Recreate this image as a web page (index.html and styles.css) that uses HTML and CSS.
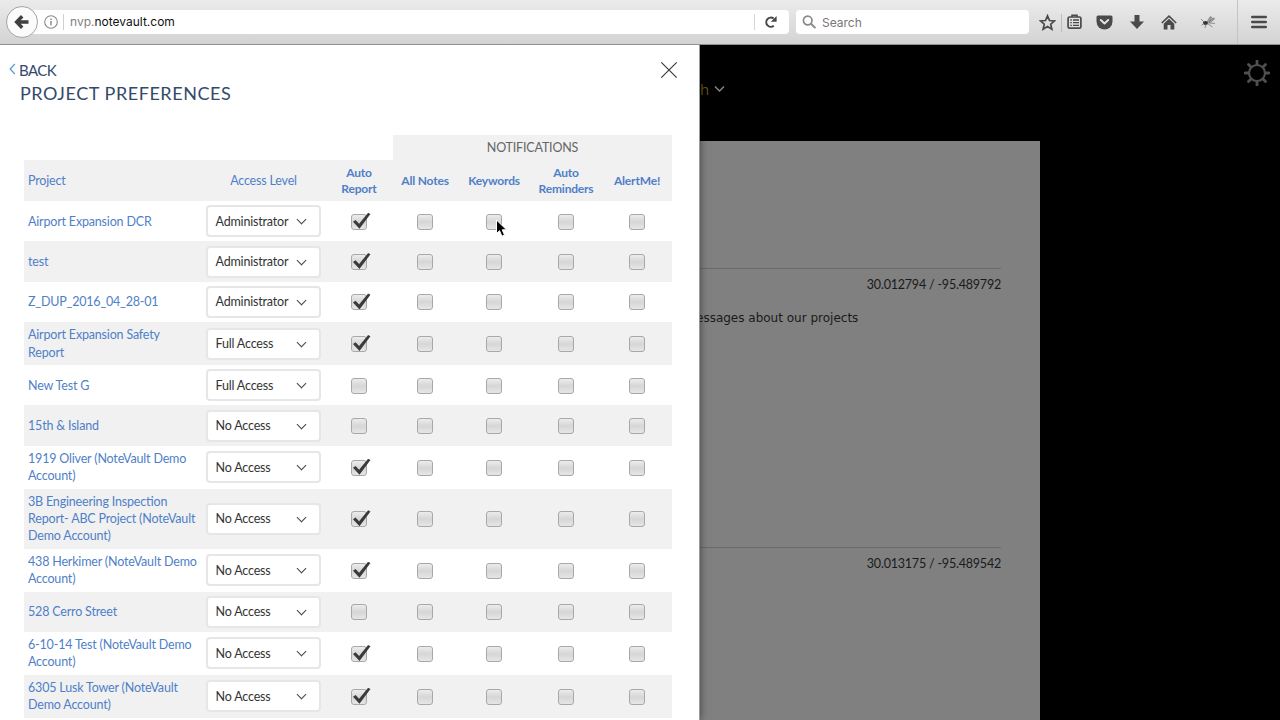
FILE: index.html
```html
<!DOCTYPE html>
<html lang="en">
<head>
  <meta charset="UTF-8" />
  <meta name="viewport" content="width=device-width, initial-scale=1.0"/>
  <title>Project Preferences</title>
  <link rel="stylesheet" href="styles.css">
</head>
<body>
  <header class="toolbar">
    <div class="address">
      <button class="back-btn" aria-label="Back">
        <svg width="16" height="16" viewBox="0 0 16 16"><path d="M14.500 8H4M8.200 2.200L2.600 8l5.600 5.800" fill="none" stroke="#3f3f3f" stroke-width="3.400"/></svg>
      </button>
      <svg class="info" width="14" height="14" viewBox="0 0 14 14"><circle cx="7" cy="7" r="6.3" fill="none" stroke="#8b8b8b" stroke-width="1.1"/><path d="M7 6v4.2M7 3.4v1.5" stroke="#8b8b8b" stroke-width="1.5"/></svg>
      <span class="url"><span class="sub">nvp.</span>notevault.com</span>
      <span class="reload">
        <svg width="14" height="14" viewBox="0 0 14 14"><path d="M9.8 10.8A4.6 4.6 0 1 1 9.6 3.5" fill="none" stroke="#484848" stroke-width="2"/><path d="M12.6 1v5.8H6.8z" fill="#484848"/></svg>
      </span>
    </div>
    <div class="search">
      <svg width="15" height="15" viewBox="0 0 15 15"><circle cx="5.7" cy="5.5" r="4.3" fill="none" stroke="#8a8a8a" stroke-width="1.7"/><path d="M8.9 8.7l4.5 4.4" stroke="#8a8a8a" stroke-width="2"/></svg>
      <span>Search</span>
    </div>
    <nav class="tools">
      <svg class="star" width="17" height="17" viewBox="0 0 17 17"><path d="M8.5 1.8l2 4.7 5 .4-3.8 3.3 1.2 5-4.400-2.700-4.400 2.700 1.200-5L1.500 6.900l5-.4z" fill="none" stroke="#4a4a4a" stroke-width="1.700"/></svg>
      <svg class="list" width="15" height="16" viewBox="0 0 15 16"><path d="M5 3V1.200h5V3" fill="none" stroke="#4a4a4a" stroke-width="1.600"/><rect x="1.100" y="3" width="12.800" height="11.200" rx="1.500" fill="none" stroke="#4a4a4a" stroke-width="1.700"/><path d="M3.300 6h1.500M6 6h6M3.300 8.700h1.500M6 8.700h6M3.300 11.400h1.500M6 11.400h6" stroke="#4a4a4a" stroke-width="1.300"/></svg>
      <svg class="pocket" width="17" height="15" viewBox="0 0 17 15"><path d="M2 .5h13q1.500 0 1.500 1.500v4.500a8 8 0 0 1-16 0V2Q.5.5 2 .5z" fill="#4a4a4a"/><path d="M4.800 5l3.700 3.500L12.200 5" fill="none" stroke="#e2e2e2" stroke-width="2" stroke-linecap="round" stroke-linejoin="round"/></svg>
      <svg class="download" width="14" height="14" viewBox="0 0 14 14"><path d="M4.500 0h5v6.500H14L7 14 0 6.500h4.500z" fill="#4a4a4a"/></svg>
      <svg class="home" width="16" height="15" viewBox="0 0 16 15"><path d="M.8 8L8 1.200 15.200 8" fill="none" stroke="#4a4a4a" stroke-width="1.600"/><path d="M8 3.700l5.300 5V14.500H9.500V10h-3v4.500H2.700V8.700z" fill="#4a4a4a"/></svg>
      <svg class="bug" width="17" height="14" viewBox="0 0 17 14"><ellipse cx="5.500" cy="8" rx="2.600" ry="2" fill="#333"/><path d="M7 7l3-5q1.500-1 1.500 1L9 7M9 7l4-4q2-.5 1 1.500L9 8" fill="#aaa" stroke="#777" stroke-width=".8"/><path d="M1 4l3 3M1.500 10.500L4 8M6 9l-1 4M7.500 8.500l5 3.500M8 7.800l7 .6" fill="none" stroke="#777" stroke-width=".8"/></svg>
      <svg class="menu" width="16" height="14" viewBox="0 0 16 14"><path d="M1.200 2h13.600M1.200 7h13.600M1.200 12h13.600" stroke="#4a4a4a" stroke-width="2.400" stroke-linecap="round"/></svg>
    </nav>
  </header>

  <main class="screen">
    <section class="panel">
      <svg class="close" width="18" height="18" viewBox="0 0 18 18"><path d="M1.300 1.300l15.400 15.400M16.700 1.300L1.300 16.700" stroke="#3b3b3b" stroke-width="1.200"/></svg>
      <a class="back"><svg width="8" height="12" viewBox="0 0 8 12"><path d="M6.800 1L2.200 6l4.600 5" fill="none" stroke="#5a9bd5" stroke-width="1.300"/></svg>BACK</a>
      <h1>PROJECT PREFERENCES</h1>

      <div class="prefs">
        <div class="group">NOTIFICATIONS</div>
        <div class="row head">
          <span class="name">Project</span>
          <span>Access Level</span>
          <b>Auto Report</b>
          <b>All Notes</b>
          <b>Keywords</b>
          <b>Auto Reminders</b>
          <b>AlertMe!</b>
        </div>
        <div class="row">
          <a class="name">Airport Expansion DCR</a>
          <div class="select">Administrator</div>
          <input type="checkbox" checked>
          <input type="checkbox">
          <input type="checkbox">
          <input type="checkbox">
          <input type="checkbox">
        </div>
        <div class="row">
          <a class="name">test</a>
          <div class="select">Administrator</div>
          <input type="checkbox" checked>
          <input type="checkbox">
          <input type="checkbox">
          <input type="checkbox">
          <input type="checkbox">
        </div>
        <div class="row">
          <a class="name">Z_DUP_2016_04_28-01</a>
          <div class="select">Administrator</div>
          <input type="checkbox" checked>
          <input type="checkbox">
          <input type="checkbox">
          <input type="checkbox">
          <input type="checkbox">
        </div>
        <div class="row">
          <a class="name">Airport Expansion Safety Report</a>
          <div class="select">Full Access</div>
          <input type="checkbox" checked>
          <input type="checkbox">
          <input type="checkbox">
          <input type="checkbox">
          <input type="checkbox">
        </div>
        <div class="row">
          <a class="name">New Test G</a>
          <div class="select">Full Access</div>
          <input type="checkbox">
          <input type="checkbox">
          <input type="checkbox">
          <input type="checkbox">
          <input type="checkbox">
        </div>
        <div class="row">
          <a class="name">15th &amp; Island</a>
          <div class="select">No Access</div>
          <input type="checkbox">
          <input type="checkbox">
          <input type="checkbox">
          <input type="checkbox">
          <input type="checkbox">
        </div>
        <div class="row">
          <a class="name">1919 Oliver (NoteVault Demo Account)</a>
          <div class="select">No Access</div>
          <input type="checkbox" checked>
          <input type="checkbox">
          <input type="checkbox">
          <input type="checkbox">
          <input type="checkbox">
        </div>
        <div class="row">
          <a class="name">3B Engineering Inspection Report- ABC Project (NoteVault Demo Account)</a>
          <div class="select">No Access</div>
          <input type="checkbox" checked>
          <input type="checkbox">
          <input type="checkbox">
          <input type="checkbox">
          <input type="checkbox">
        </div>
        <div class="row">
          <a class="name">438 Herkimer (NoteVault Demo Account)</a>
          <div class="select">No Access</div>
          <input type="checkbox" checked>
          <input type="checkbox">
          <input type="checkbox">
          <input type="checkbox">
          <input type="checkbox">
        </div>
        <div class="row">
          <a class="name">528 Cerro Street</a>
          <div class="select">No Access</div>
          <input type="checkbox">
          <input type="checkbox">
          <input type="checkbox">
          <input type="checkbox">
          <input type="checkbox">
        </div>
        <div class="row">
          <a class="name">6-10-14 Test (NoteVault Demo Account)</a>
          <div class="select">No Access</div>
          <input type="checkbox" checked>
          <input type="checkbox">
          <input type="checkbox">
          <input type="checkbox">
          <input type="checkbox">
        </div>
        <div class="row">
          <a class="name">6305 Lusk Tower (NoteVault Demo Account)</a>
          <div class="select">No Access</div>
          <input type="checkbox" checked>
          <input type="checkbox">
          <input type="checkbox">
          <input type="checkbox">
          <input type="checkbox">
        </div>
      </div>
    </section>

    <section class="page">
      <div class="page-top">
        <span class="lang">h</span>
        <svg class="lang-arrow" width="11" height="8" viewBox="0 0 11 8"><path d="M1 1.500l4.500 4.500L10 1.500" fill="none" stroke="#858585" stroke-width="1.500"/></svg>
        <svg class="gear" width="26" height="26" viewBox="-13 -13 26 26" fill="none" stroke="#505050"><circle r="8" stroke-width="2.200"/><path d="M0-8.500V-12M0 8.500V12M-8.500 0H-12M8.500 0H12M-6-6l-2.500-2.500M6-6l2.500-2.500M-6 6l-2.500 2.500M6 6l2.500 2.500" stroke-width="2.800" stroke-linecap="round"/></svg>
      </div>
      <div class="notes">
        <article class="note">
          <div class="coords">30.012794 / -95.489792</div>
          <p>essages about our projects</p>
        </article>
        <article class="note">
          <div class="coords">30.013175 / -95.489542</div>
        </article>
      </div>
    </section>
  </main>

  <svg class="cursor" width="14" height="20" viewBox="0 0 14 20"><path d="M1.500 1v13.500l3.100-2.800 2.300 5.500 2.600-1.100-2.300-5.300h4.300z" fill="#000" stroke="#fff" stroke-width="1"/></svg>
</body>
</html>
```
FILE: styles.css
```css
:root {
  --link: #4f7fc8;
  --navy: #34496b;
  --stripe: #f1f1f1;
}

* {
  box-sizing: border-box;
}

body {
  margin: 0;
  height: 720px;
  overflow: hidden;
  display: flex;
  flex-direction: column;
  font-family: Lato, sans-serif;
  background: #000;
}

/* browser bar */
.toolbar {
  height: 45px;
  flex: none;
  display: flex;
  align-items: center;
  background: linear-gradient(#ebebeb, #d3d3d3);
  border-bottom: 1px solid #8f8f8f;
  font-family: Inter, sans-serif;
  font-size: 12px;
}

.address {
  display: flex;
  align-items: center;
  width: 783px;
  height: 24px;
  margin-left: 6px;
  background: linear-gradient(90deg, transparent 20px, #fff 20px);
  border-radius: 4px;
}

.back-btn {
  width: 32px;
  height: 32px;
  flex: none;
  display: flex;
  align-items: center;
  justify-content: center;
  padding: 0;
  border: 1px solid #a5a5a5;
  border-radius: 50%;
  background: #fbfbfb;
}

.info {
  margin-left: 6px;
}

.url {
  margin-left: 5px;
  padding-left: 6px;
  border-left: 1px solid #d0d0d0;
  line-height: 16px;
  color: #111;
}

.sub {
  color: #808080;
}

.reload {
  display: flex;
  margin-left: auto;
  height: 16px;
  align-items: center;
  padding: 0 11px 0 9px;
  border-left: 1px solid #d5d5d5;
}

.search {
  display: flex;
  align-items: center;
  gap: 5px;
  width: 233px;
  height: 24px;
  margin-left: 7px;
  padding-left: 6px;
  background: #fff;
  border-radius: 4px;
  color: #777;
}

.tools {
  flex: 1;
  height: 44px;
  display: flex;
  align-items: center;
  background:
    linear-gradient(#bcbcbc, #bcbcbc) 32px 14px / 1px 18px no-repeat,
    linear-gradient(#c4c4c4, #c4c4c4) 208px 0 / 1px 44px no-repeat;
}

.star {
  margin-left: 10px;
}

.list {
  margin-left: 11px;
}

.pocket {
  margin-left: 14px;
}

.download {
  margin-left: 17px;
}

.home {
  margin-left: 17px;
}

.bug {
  margin-left: 23px;
}

.menu {
  margin-left: 34px;
}

/* side panel */
.screen {
  flex: 1;
  display: flex;
  min-height: 0;
  overflow: hidden;
}

.panel {
  position: relative;
  z-index: 1;
  width: 700px;
  flex: none;
  padding: 16px 27px 0 24px;
  background: #fff;
  border-right: 1px solid #999;
  box-shadow: 0 0 8px rgba(0,0,0,0.5);
}

.close {
  position: absolute;
  top: 16px;
  right: 21px;
}

.back {
  display: flex;
  align-items: center;
  gap: 3px;
  height: 18px;
  margin-left: -16px;
  font-size: 15px;
  letter-spacing: -0.6px;
  color: var(--navy);
}

.back svg {
  margin-bottom: 3px;
}

h1 {
  margin: 3px 0 0 -4px;
  font-size: 18px;
  font-weight: 400;
  line-height: 22px;
  letter-spacing: 0.55px;
  color: var(--navy);
}

.prefs {
  margin-top: 31px;
  font-size: 12.5px;
  font-feature-settings: "liga" 1;
  letter-spacing: -0.18px;
  line-height: 17.25px;
  color: var(--link);
}

.group {
  height: 25px;
  margin-left: 369px;
  background: var(--stripe);
  color: #666;
  text-align: center;
  line-height: 25px;
}

.row {
  display: grid;
  grid-template-columns: 177px 125px 66px 66px 72px 72px 70px;
  align-items: center;
  justify-items: center;
  padding: 4.2px 0;
}

.row:nth-child(even) {
  background: var(--stripe);
}

.head {
  height: 41px;
  text-align: center;
  line-height: 16px;
  padding: 0;
}

.head b {
  max-width: 60px;
  font-size: 12px;
}

.name {
  justify-self: start;
  padding: 0 3.5px 0 4px;
}

.select {
  display: flex;
  align-items: center;
  justify-content: space-between;
  width: 115px;
  height: 32px;
  padding: 0 14px 0 7.5px;
  border: 2px solid #e6e6e6;
  border-radius: 4px;
  background: #fff;
  color: #333;
}

.select::after {
  content: "";
  width: 6px;
  height: 6px;
  margin-top: -3px;
  border: solid #444;
  border-width: 0 1.3px 1.3px 0;
  transform: rotate(45deg);
}

input[type="checkbox"] {
  appearance: none;
  position: relative;
  width: 16px;
  height: 16px;
  margin: 1px 0 0;
  border: 1px solid #a8a8a8;
  border-radius: 3px;
  background: linear-gradient(#ececec, #d6d6d6 50%, #e6e6e6);
}

input[type="checkbox"]:checked::after {
  content: "";
  position: absolute;
  left: 1px;
  top: -2px;
  width: 18px;
  height: 16px;
  background: #3a3a3a;
  clip-path: polygon(0 56%, 14% 45%, 34% 69%, 84% 0, 97% 8%, 36% 100%);
}

/* dimmed page behind the panel */
.page {
  flex: 1;
  display: flex;
  flex-direction: column;
}

.page-top {
  display: flex;
  flex: none;
  align-items: center;
  height: 96px;
  padding: 0 10px 8px 0;
}

.lang {
  font-family: "Open Sans", sans-serif;
  font-size: 15px;
  color: #6d5310;
}

.lang-arrow {
  margin-left: 5px;
}

.gear {
  margin: -32px 0 0 auto;
}

.notes {
  width: 340px;
  flex: 1;
  min-height: 0;
  overflow: hidden;
  padding: 127px 39px 0 0;
  background: #808080;
}

.note {
  border-top: 1px solid #6b6b6b;
  font-size: 12.5px;
  letter-spacing: -0.2px;
  color: #1a1a1a;
}

.note:first-child {
  height: 279px;
}

.coords {
  padding-top: 7px;
  text-align: right;
  line-height: 18px;
}

.note p {
  margin: 15px 0 0 -4px;
  font-family: "DejaVu Sans", sans-serif;
  font-size: 12px;
  letter-spacing: 0;
  line-height: 18px;
}

.cursor {
  position: absolute;
  z-index: 2;
  left: 495px;
  top: 219px;
}
```
